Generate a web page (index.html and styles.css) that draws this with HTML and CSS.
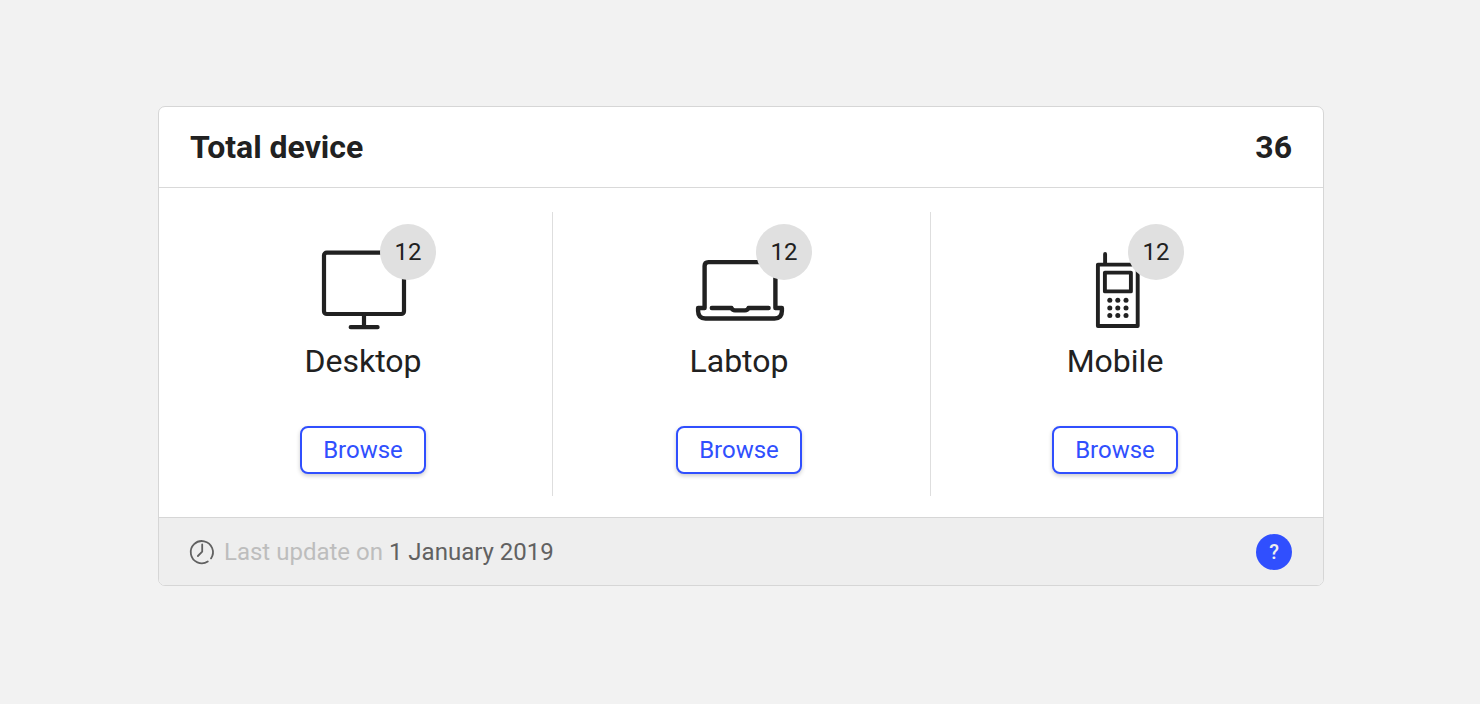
FILE: index.html
```html
<!DOCTYPE html>
<html lang="en">
<head>
<meta charset="utf-8">
<title>Total device</title>
<link rel="stylesheet" href="styles.css">
</head>
<body>
<main class="card">
  <header class="card-header">
    <h1 class="title">Total device</h1>
    <span class="total">36</span>
  </header>
  <div class="devices">
    <section class="device device-first">
      <div class="device-icon">
        <svg class="icon" viewBox="299 212 128 128">
          <rect x="324" y="252.6" width="80" height="61.4" rx="2.8"/>
          <path d="M364 315V327M350.7 327.2H377.6"/>
        </svg>
        <span class="badge badge-desktop">12</span>
      </div>
      <h2 class="name">Desktop</h2>
      <button class="browse">Browse</button>
    </section>
    <section class="device device-middle">
      <div class="device-icon">
        <svg class="icon icon-laptop" viewBox="675 212 128 128">
          <path d="M698.1 308H704.6V266Q704.6 262.1 708.5 262.1H771.5Q775.4 262.1 775.4 266V308H781.9V311Q781.9 318.5 774.5 318.5H705.5Q698.1 318.5 698.1 311Z"/>
          <path d="M711.8 308H731.5Q732.5 310.4 735 310.4H745Q747.5 310.4 748.5 308H768.6"/>
        </svg>
        <span class="badge badge-laptop">12</span>
      </div>
      <h2 class="name">Labtop</h2>
      <button class="browse">Browse</button>
    </section>
    <section class="device device-last">
      <div class="device-icon">
        <svg class="icon icon-phone" viewBox="1051 212 128 128">
          <path d="M1105.1 254V264M1097.9 264.6H1137.7V326H1097.9Z"/>
          <rect x="1104.9" y="272.6" width="26" height="18.8"/>
          <g class="keys">
            <circle cx="1109.8" cy="300.3" r="2.5"/><circle cx="1117.8" cy="300.3" r="2.5"/><circle cx="1126" cy="300.3" r="2.5"/>
            <circle cx="1109.8" cy="307.9" r="2.5"/><circle cx="1117.8" cy="307.9" r="2.5"/><circle cx="1126" cy="307.9" r="2.5"/>
            <circle cx="1109.8" cy="315.6" r="2.5"/><circle cx="1117.8" cy="315.6" r="2.5"/><circle cx="1126" cy="315.6" r="2.5"/>
          </g>
        </svg>
        <span class="badge badge-mobile">12</span>
      </div>
      <h2 class="name">Mobile</h2>
      <button class="browse">Browse</button>
    </section>
  </div>
  <footer class="card-footer">
    <svg class="clock" viewBox="0 0 24 24">
      <path d="M17.8 21.5A11.1 11.1 0 1 1 21 18.4M12.2 4.4V11.7L7.9 16"/>
    </svg>
    <p class="updated">Last update on <span class="date">1 January 2019</span></p>
    <button class="help">?</button>
  </footer>
</main>
</body>
</html>
```

FILE: styles.css
```css
* {
  box-sizing: border-box;
}

body {
  margin: 0;
  padding: 106px 156px 0 158px;
  height: 704px;
  background: #f2f2f2;
  color: #212121;
  font-family: Roboto, sans-serif;
}

.card {
  display: flex;
  flex-direction: column;
  height: 480px;
  overflow: hidden;
  background: #fff;
  border: 1px solid #d6d6d6;
  border-radius: 7px;
}

.card-header {
  display: flex;
  align-items: center;
  justify-content: space-between;
  height: 81px;
  padding: 0 31px;
  border-bottom: 1px solid #d9d9d9;
}

.title,
.total {
  margin: 0;
  font-size: 32px;
  font-weight: 700;
  line-height: 40px;
}

.devices {
  display: grid;
  grid-template-columns: 379px 378px 368px;
  height: 329px;
  padding: 24px 0 21px 15px;
}

.device {
  display: flex;
  flex-direction: column;
  align-items: center;
}

.device-first,
.device-middle {
  border-right: 1px solid #dedede;
}

.device-middle {
  padding-right: 5px;
}

.device-icon {
  position: relative;
  width: 128px;
  height: 128px;
}

.icon {
  display: block;
  width: 128px;
  height: 128px;
  fill: none;
  stroke: #212121;
  stroke-width: 4.2;
  stroke-linecap: round;
  stroke-linejoin: round;
}

.icon-laptop {
  stroke-width: 4.4;
}

.icon-phone {
  stroke-width: 3.9;
}

.keys {
  fill: #212121;
  stroke: none;
}

.badge {
  position: absolute;
  top: 12px;
  width: 56px;
  height: 56px;
  border-radius: 50%;
  background: #e0e0e0;
  font-size: 24px;
  line-height: 56px;
  text-align: center;
}

.badge-desktop,
.badge-laptop {
  left: 81px;
}

.badge-mobile {
  left: 77px;
}

.name {
  margin: 0;
  font-size: 32px;
  font-weight: 400;
  line-height: 42px;
}

.browse {
  width: 126px;
  height: 48px;
  margin-top: 44px;
  padding: 0;
  border: 2px solid #304ffe;
  border-radius: 8px;
  background: #fff;
  box-shadow: 0 2px 4px rgba(0, 0, 0, 0.2);
  color: #304ffe;
  font: 400 24px/44px Roboto, sans-serif;
}

.card-footer {
  display: flex;
  flex: 1;
  align-items: center;
  padding: 0 31px;
  border-top: 1px solid #d6d6d6;
  background: #eee;
}

.clock {
  width: 24px;
  height: 24px;
  margin-right: 10px;
  overflow: visible;
  fill: none;
  stroke: #616161;
  stroke-width: 1.8;
  stroke-linecap: round;
  stroke-linejoin: round;
}

.updated {
  flex: 1;
  margin: 0;
  color: #bdbdbd;
  font-size: 24px;
  line-height: 32px;
}

.date {
  color: #616161;
}

.help {
  width: 36px;
  height: 36px;
  padding: 0;
  border: 0;
  border-radius: 50%;
  background: #304ffe;
  color: #eee;
  font: 500 20px/36px Roboto, sans-serif;
}
```
